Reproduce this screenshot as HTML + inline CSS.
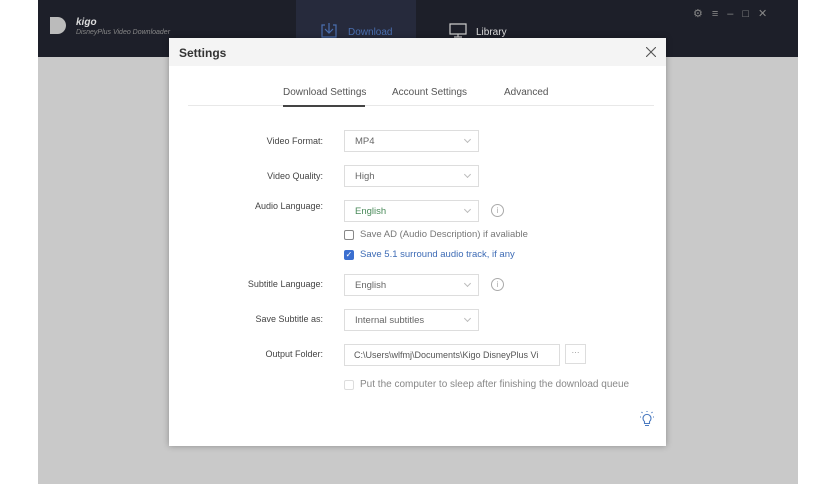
<!DOCTYPE html><html><head><style>
*{margin:0;padding:0;box-sizing:border-box}
body{width:836px;height:484px;background:#fff;font-family:"Liberation Sans",sans-serif;position:relative;overflow:hidden}
.app{position:absolute;left:38px;top:0;width:760px;height:484px;background:#c9c9c9}
.bar{position:absolute;left:0;top:0;width:760px;height:57px;background:#1d1f29}
.dlg{position:absolute;left:169px;top:38px;width:497px;height:408px;background:#fff;box-shadow:0 0 6px rgba(0,0,0,.3)}
.hdr{height:28px;background:#f4f4f4;font-size:12px;font-weight:bold;color:#333;padding:8px 10px}
.t{position:absolute;font-size:10px;color:#555;white-space:nowrap}
.lab{position:absolute;font-size:9px;color:#444;text-align:right;width:150px;left:4px}
.sel{position:absolute;left:175px;width:135px;height:22px;border:1px solid #ddd;font-size:9.5px;color:#666;padding:5px 10px;white-space:nowrap;overflow:hidden}
.arr:after{content:"";position:absolute;right:8px;top:6px;width:4px;height:4px;border-right:1px solid #bbb;border-bottom:1px solid #bbb;transform:rotate(45deg)}
.info{position:absolute;left:322px;width:13px;height:13px;border:1px solid #aaa;border-radius:50%;font-size:8px;color:#aaa;text-align:center;line-height:11px}
.cb{position:absolute;left:175px;width:10px;height:10px;border:1px solid #888;border-radius:2px}
</style></head><body>
<div class="app">
<div class="bar">
<div style="position:absolute;left:258px;top:0;width:120px;height:38px;background:#262a3c"></div>
<div style="position:absolute;left:12px;top:17px;width:16px;height:17px;background:#bbb;border-radius:0 9px 9px 0"></div>
<div style="position:absolute;left:38px;top:17px;font-size:10px;font-style:italic;font-weight:bold;color:#ddd">kigo</div>
<div style="position:absolute;left:38px;top:29px;font-size:7px;font-style:italic;color:#888">DisneyPlus Video Downloader</div>
<svg style="position:absolute;left:282px;top:22px" width="18" height="16" viewBox="0 0 18 16"><path d="M5 3H2v12h14V3h-3M9 1v10M5 7l4 4 4-4" fill="none" stroke="#4a6fb0" stroke-width="1.2"/></svg>
<div style="position:absolute;left:310px;top:27px;font-size:10px;color:#4a6fb0">Download</div>
<svg style="position:absolute;left:411px;top:23px" width="18" height="16" viewBox="0 0 18 16"><path d="M1 1h16v10H1zM5 14h8M9 11v3" fill="none" stroke="#ccc" stroke-width="1.2"/></svg>
<div style="position:absolute;left:438px;top:27px;font-size:10px;color:#ddd">Library</div>
<div style="position:absolute;left:655px;top:7px;font-size:11px;color:#888;letter-spacing:9px">⚙≡–□✕</div>
</div>
</div>
<div class="dlg">
<div class="hdr">Settings<svg style="position:absolute;right:10px;top:9px" width="10" height="10"><path d="M0 0L10 10M10 0L0 10" stroke="#555" stroke-width="1.1"/></svg></div>
<div style="position:absolute;left:19px;top:67px;width:466px;height:1px;background:#e8e8e8"></div>
<div class="t" style="left:114px;top:49px">Download Settings</div>
<div style="position:absolute;left:114px;top:67px;width:82px;height:2px;background:#444"></div>
<div class="t" style="left:223px;top:49px">Account Settings</div>
<div class="t" style="left:335px;top:49px">Advanced</div>
<div class="lab" style="top:98px">Video Format:</div><div class="sel arr" style="top:92px">MP4</div>
<div class="lab" style="top:133px">Video Quality:</div><div class="sel arr" style="top:127px">High</div>
<div class="lab" style="top:163px">Audio Language:</div><div class="sel arr" style="top:162px;color:#4a8a5a">English</div><div class="info" style="top:166px">i</div>
<div class="cb" style="top:192px"></div><div class="t" style="left:191px;top:191px;font-size:9.5px;color:#777">Save AD (Audio Description) if avaliable</div>
<div class="cb" style="top:212px;background:#3b6fd0;border-color:#3b6fd0;color:#fff;font-size:8px;line-height:8px;text-align:center">✓</div><div class="t" style="left:191px;top:211px;font-size:9.5px;color:#3d6bb5">Save 5.1 surround audio track, if any</div>
<div class="lab" style="top:241px">Subtitle Language:</div><div class="sel arr" style="top:236px">English</div><div class="info" style="top:240px">i</div>
<div class="lab" style="top:276px">Save Subtitle as:</div><div class="sel arr" style="top:271px">Internal subtitles</div>
<div class="lab" style="top:311px">Output Folder:</div>
<div class="sel" style="top:306px;width:216px;color:#555;font-size:9px;padding-left:9px">C:\Users\wlfmj\Documents\Kigo DisneyPlus Vi</div>
<div style="position:absolute;left:396px;top:306px;width:21px;height:20px;border:1px solid #ddd;font-size:8px;color:#888;text-align:center;line-height:16px">···</div>
<div class="cb" style="top:342px;border-color:#ddd"></div><div class="t" style="left:191px;top:341px;font-size:10px;color:#888">Put the computer to sleep after finishing the download queue</div>
<svg style="position:absolute;left:471px;top:373px" width="14" height="16" viewBox="0 0 14 16"><path d="M4.5 10.5a4 4 0 1 1 5 0v2h-5z M5 14.5h4 M7 1V0 M1 6H0 M14 6h-1 M2.5 2l-1-1 M11.5 2l1-1" fill="none" stroke="#4a7ac0" stroke-width="1.1"/></svg>
</div>
</body></html>
